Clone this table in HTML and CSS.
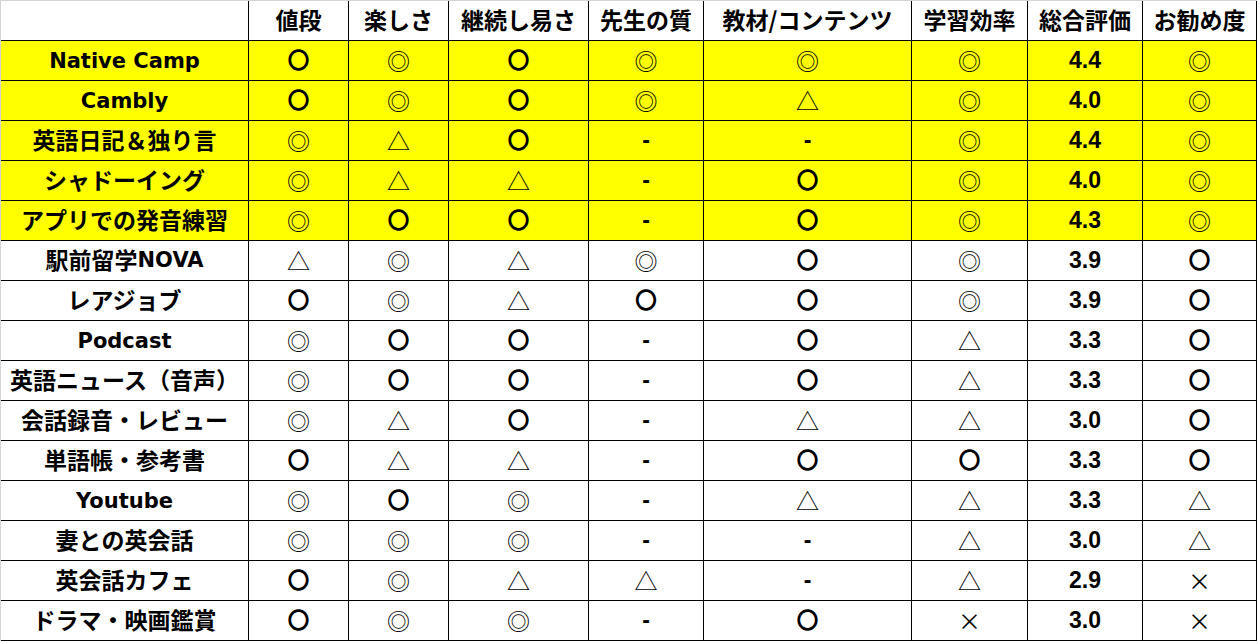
FILE: index.html
```html
<!DOCTYPE html>
<html lang="ja">
<head>
<meta charset="utf-8">
<title>英語学習方法 比較表</title>
<link rel="stylesheet" href="styles.css">
</head>
<body>
<div class="sheet">
  <div class="grid">
    <div class="row head">
      <div class="c"></div>
      <div class="c">値段</div>
      <div class="c">楽しさ</div>
      <div class="c">継続し易さ</div>
      <div class="c">先生の質</div>
      <div class="c">教材/コンテンツ</div>
      <div class="c">学習効率</div>
      <div class="c">総合評価</div>
      <div class="c">お勧め度</div>
    </div>

    <div class="row hl">
      <div class="c latname"><span class="lat">Native Camp</span></div>
      <div class="c"><span class="o">〇</span></div>
      <div class="c"><span class="s">◎</span></div>
      <div class="c"><span class="o">〇</span></div>
      <div class="c"><span class="s">◎</span></div>
      <div class="c"><span class="s">◎</span></div>
      <div class="c"><span class="s">◎</span></div>
      <div class="c"><span class="num">4.4</span></div>
      <div class="c"><span class="s">◎</span></div>
    </div>
    <div class="row hl">
      <div class="c latname"><span class="lat">Cambly</span></div>
      <div class="c"><span class="o">〇</span></div>
      <div class="c"><span class="s">◎</span></div>
      <div class="c"><span class="o">〇</span></div>
      <div class="c"><span class="s">◎</span></div>
      <div class="c"><span class="s">△</span></div>
      <div class="c"><span class="s">◎</span></div>
      <div class="c"><span class="num">4.0</span></div>
      <div class="c"><span class="s">◎</span></div>
    </div>
    <div class="row hl">
      <div class="c name">英語日記＆独り言</div>
      <div class="c"><span class="s">◎</span></div>
      <div class="c"><span class="s">△</span></div>
      <div class="c"><span class="o">〇</span></div>
      <div class="c"><span class="num">-</span></div>
      <div class="c"><span class="num">-</span></div>
      <div class="c"><span class="s">◎</span></div>
      <div class="c"><span class="num">4.4</span></div>
      <div class="c"><span class="s">◎</span></div>
    </div>
    <div class="row hl">
      <div class="c name">シャドーイング</div>
      <div class="c"><span class="s">◎</span></div>
      <div class="c"><span class="s">△</span></div>
      <div class="c"><span class="s">△</span></div>
      <div class="c"><span class="num">-</span></div>
      <div class="c"><span class="o">〇</span></div>
      <div class="c"><span class="s">◎</span></div>
      <div class="c"><span class="num">4.0</span></div>
      <div class="c"><span class="s">◎</span></div>
    </div>
    <div class="row hl">
      <div class="c name">アプリでの発音練習</div>
      <div class="c"><span class="s">◎</span></div>
      <div class="c"><span class="o">〇</span></div>
      <div class="c"><span class="o">〇</span></div>
      <div class="c"><span class="num">-</span></div>
      <div class="c"><span class="o">〇</span></div>
      <div class="c"><span class="s">◎</span></div>
      <div class="c"><span class="num">4.3</span></div>
      <div class="c"><span class="s">◎</span></div>
    </div>

    <div class="row">
      <div class="c name">駅前留学<span class="lat">NOVA</span></div>
      <div class="c"><span class="s">△</span></div>
      <div class="c"><span class="s">◎</span></div>
      <div class="c"><span class="s">△</span></div>
      <div class="c"><span class="s">◎</span></div>
      <div class="c"><span class="o">〇</span></div>
      <div class="c"><span class="s">◎</span></div>
      <div class="c"><span class="num">3.9</span></div>
      <div class="c"><span class="o">〇</span></div>
    </div>
    <div class="row">
      <div class="c name">レアジョブ</div>
      <div class="c"><span class="o">〇</span></div>
      <div class="c"><span class="s">◎</span></div>
      <div class="c"><span class="s">△</span></div>
      <div class="c"><span class="o">〇</span></div>
      <div class="c"><span class="o">〇</span></div>
      <div class="c"><span class="s">◎</span></div>
      <div class="c"><span class="num">3.9</span></div>
      <div class="c"><span class="o">〇</span></div>
    </div>
    <div class="row">
      <div class="c latname"><span class="lat">Podcast</span></div>
      <div class="c"><span class="s">◎</span></div>
      <div class="c"><span class="o">〇</span></div>
      <div class="c"><span class="o">〇</span></div>
      <div class="c"><span class="num">-</span></div>
      <div class="c"><span class="o">〇</span></div>
      <div class="c"><span class="s">△</span></div>
      <div class="c"><span class="num">3.3</span></div>
      <div class="c"><span class="o">〇</span></div>
    </div>
    <div class="row">
      <div class="c name">英語ニュース（音声）</div>
      <div class="c"><span class="s">◎</span></div>
      <div class="c"><span class="o">〇</span></div>
      <div class="c"><span class="o">〇</span></div>
      <div class="c"><span class="num">-</span></div>
      <div class="c"><span class="o">〇</span></div>
      <div class="c"><span class="s">△</span></div>
      <div class="c"><span class="num">3.3</span></div>
      <div class="c"><span class="o">〇</span></div>
    </div>
    <div class="row">
      <div class="c name">会話録音・レビュー</div>
      <div class="c"><span class="s">◎</span></div>
      <div class="c"><span class="s">△</span></div>
      <div class="c"><span class="o">〇</span></div>
      <div class="c"><span class="num">-</span></div>
      <div class="c"><span class="s">△</span></div>
      <div class="c"><span class="s">△</span></div>
      <div class="c"><span class="num">3.0</span></div>
      <div class="c"><span class="o">〇</span></div>
    </div>
    <div class="row">
      <div class="c name">単語帳・参考書</div>
      <div class="c"><span class="o">〇</span></div>
      <div class="c"><span class="s">△</span></div>
      <div class="c"><span class="s">△</span></div>
      <div class="c"><span class="num">-</span></div>
      <div class="c"><span class="o">〇</span></div>
      <div class="c"><span class="o">〇</span></div>
      <div class="c"><span class="num">3.3</span></div>
      <div class="c"><span class="o">〇</span></div>
    </div>
    <div class="row">
      <div class="c latname"><span class="lat">Youtube</span></div>
      <div class="c"><span class="s">◎</span></div>
      <div class="c"><span class="o">〇</span></div>
      <div class="c"><span class="s">◎</span></div>
      <div class="c"><span class="num">-</span></div>
      <div class="c"><span class="s">△</span></div>
      <div class="c"><span class="s">△</span></div>
      <div class="c"><span class="num">3.3</span></div>
      <div class="c"><span class="s">△</span></div>
    </div>
    <div class="row">
      <div class="c name">妻との英会話</div>
      <div class="c"><span class="s">◎</span></div>
      <div class="c"><span class="s">◎</span></div>
      <div class="c"><span class="s">◎</span></div>
      <div class="c"><span class="num">-</span></div>
      <div class="c"><span class="num">-</span></div>
      <div class="c"><span class="s">△</span></div>
      <div class="c"><span class="num">3.0</span></div>
      <div class="c"><span class="s">△</span></div>
    </div>
    <div class="row">
      <div class="c name">英会話カフェ</div>
      <div class="c"><span class="o">〇</span></div>
      <div class="c"><span class="s">◎</span></div>
      <div class="c"><span class="s">△</span></div>
      <div class="c"><span class="s">△</span></div>
      <div class="c"><span class="num">-</span></div>
      <div class="c"><span class="s">△</span></div>
      <div class="c"><span class="num">2.9</span></div>
      <div class="c"><span class="x">×</span></div>
    </div>
    <div class="row">
      <div class="c name">ドラマ・映画鑑賞</div>
      <div class="c"><span class="o">〇</span></div>
      <div class="c"><span class="s">◎</span></div>
      <div class="c"><span class="s">◎</span></div>
      <div class="c"><span class="num">-</span></div>
      <div class="c"><span class="o">〇</span></div>
      <div class="c"><span class="x">×</span></div>
      <div class="c"><span class="num">3.0</span></div>
      <div class="c"><span class="x">×</span></div>
    </div>
  </div>
</div>
</body>
</html>
```

FILE: styles.css
```css
html, body {
  margin: 0;
  padding: 0;
  background: #ffffff;
}

.sheet {
  border-top: 1px solid #d4d4d4;
  border-left: 1px solid #d4d4d4;
  width: 1256px;
  height: 640px;
  overflow: hidden;
  font-family: "Noto Sans CJK JP", "DejaVu Sans", sans-serif;
  font-weight: 700;
  font-size: 23px;
  color: #000;
}

.grid {
  display: grid;
  grid-template-columns: 248px 100px 100px 140px 115px 208px 116px 115px 114px;
  grid-auto-rows: 40px;
}

.row {
  display: contents;
}

.c {
  box-sizing: border-box;
  border-right: 1px solid #000;
  border-bottom: 1px solid #000;
  display: flex;
  align-items: center;
  justify-content: center;
  white-space: nowrap;
  line-height: 1;
  background: #ffffff;
}

.hl > .c {
  background: #ffff00;
}

.head > .c {
  padding-bottom: 3px;
}

.name {
  padding-bottom: 3px;
}

.latname {
  padding-top: 2px;
}

.name .lat {
  position: relative;
  top: 1px;
}

.lat {
  font-family: "DejaVu Sans", sans-serif;
  font-size: 21px;
  font-weight: 700;
}

.num {
  font-family: "Liberation Sans", Arial, sans-serif;
  font-size: 23px;
  font-weight: 700;
}

.o {
  font-family: "Noto Sans CJK JP", sans-serif;
  font-weight: 700;
  font-size: 22px;
  margin-bottom: 5px;
}

.s {
  font-family: "Noto Sans CJK JP", sans-serif;
  font-weight: 400;
  font-size: 23px;
}

.x {
  font-family: "Noto Sans CJK JP", sans-serif;
  font-weight: 400;
  font-size: 23px;
}
```
